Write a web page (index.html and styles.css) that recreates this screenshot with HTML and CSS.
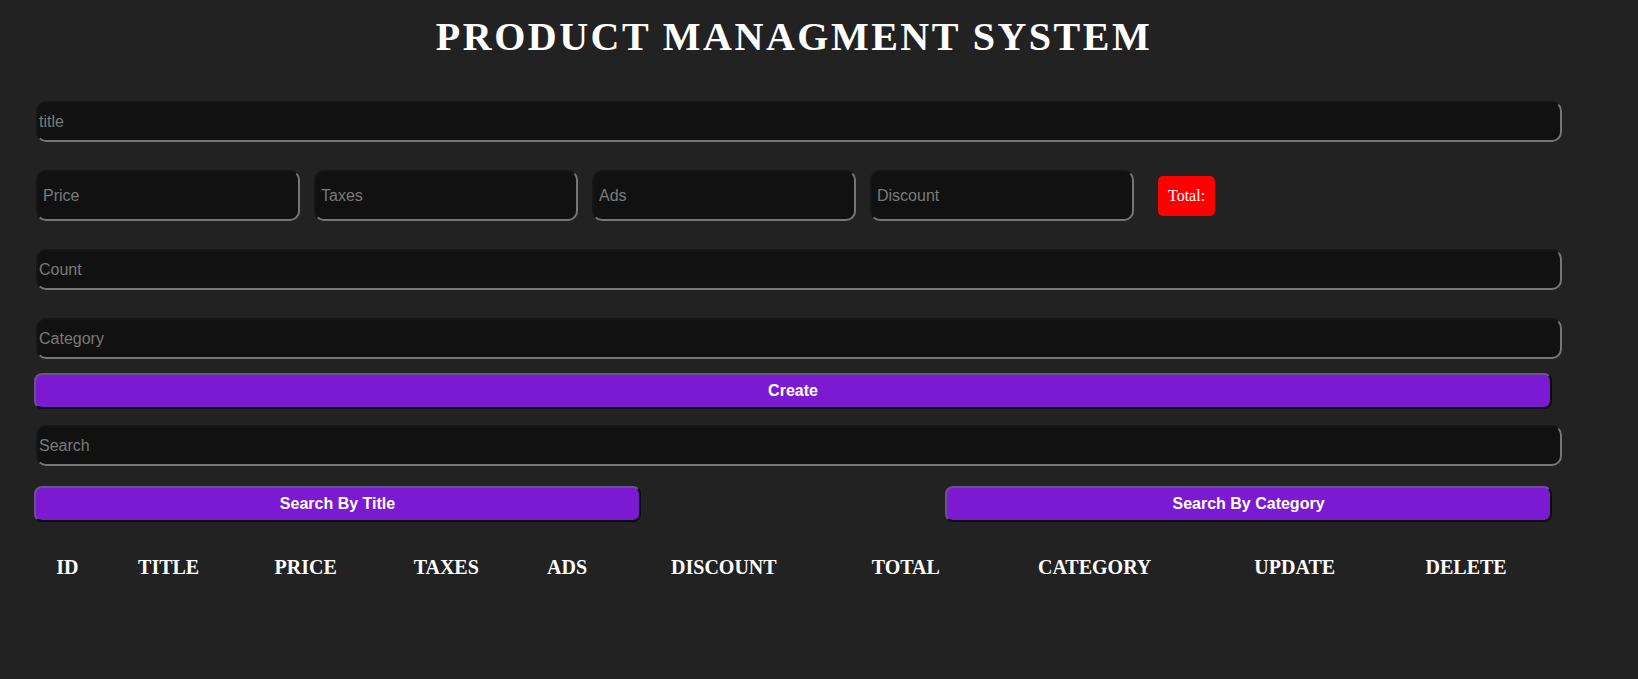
FILE: index.html
```html
<!DOCTYPE html>
<html lang="en">
<head>
<meta charset="utf-8">
<title>Product Managment System</title>
<link rel="stylesheet" href="styles.css">
</head>
<body>
<main class="app">
  <h1 class="heading">PRODUCT MANAGMENT SYSTEM</h1>
  <div class="form">
    <input class="field wide" type="text" placeholder="title">
    <div class="price-row">
      <input class="field small" type="number" placeholder="Price">
      <input class="field small" type="number" placeholder="Taxes">
      <input class="field small" type="number" placeholder="Ads">
      <input class="field small" type="number" placeholder="Discount">
      <small class="total">Total:</small>
    </div>
    <input class="field wide count" type="number" placeholder="Count">
    <input class="field wide category" type="text" placeholder="Category">
    <button class="btn create">Create</button>
    <input class="field wide search" type="text" placeholder="Search">
    <div class="search-btns">
      <button class="btn half">Search By Title</button>
      <button class="btn half">Search By Category</button>
    </div>
  </div>
  <table class="products">
    <thead>
      <tr>
        <th>id</th>
        <th>title</th>
        <th>price</th>
        <th>taxes</th>
        <th>ads</th>
        <th>discount</th>
        <th>total</th>
        <th>category</th>
        <th>update</th>
        <th>delete</th>
      </tr>
    </thead>
    <tbody></tbody>
  </table>
</main>
</body>
</html>
```
FILE: styles.css
```css
html, body {
  margin: 0;
  background: #222222;
}

body {
  color: #ffffff;
  font-family: "Liberation Serif", "Times New Roman", serif;
  height: 679px;
  overflow: hidden;
}

.app {
  padding-left: 34px;
  width: 1528px;
}

.heading {
  margin: 14px 0 0;
  width: 1520px;
  text-align: center;
  font-size: 40px;
  line-height: 46px;
  letter-spacing: 2.5px;
  font-weight: bold;
}

.form {
  display: flex;
  flex-direction: column;
  align-items: flex-start;
  margin-top: 41px;
}

.field {
  box-sizing: border-box;
  background: #111111;
  border: 2px solid;
  border-color: #161616 #767676 #767676 #161616;
  border-radius: 10px;
  font-family: "Liberation Sans", Arial, sans-serif;
  font-size: 16px;
  color: #dddddd;
  outline: none;
  margin: 0;
}

.field::placeholder {
  color: #7a7a7a;
}

.field::-webkit-outer-spin-button,
.field::-webkit-inner-spin-button {
  -webkit-appearance: none;
  margin: 0;
}

.wide {
  width: 1526px;
  height: 41px;
  margin-left: 2px;
  padding: 1px;
}

.price-row {
  display: flex;
  align-items: center;
  gap: 14px;
  margin-top: 28px;
  margin-left: 2px;
}

.small {
  width: 264px;
  height: 51px;
  padding: 0 5px;
}

.total {
  margin-left: 10px;
  background: #ff0000;
  color: #ffffff;
  padding: 10px;
  border-radius: 5px;
  font-family: "Liberation Serif", "Times New Roman", serif;
  font-size: 16px;
  line-height: 20px;
}

.count {
  margin-top: 28px;
}

.category {
  margin-top: 28px;
}

.btn {
  box-sizing: border-box;
  height: 36px;
  background: #7b19d3;
  color: #ffffff;
  font-family: "Liberation Sans", Arial, sans-serif;
  font-size: 16px;
  font-weight: bold;
  border: 2px solid;
  border-color: #6c5190 #060606 #060606 #6c5190;
  border-radius: 8px;
  padding: 0;
  cursor: pointer;
}

.create {
  width: 1518px;
  margin-top: 14px;
}

.search {
  margin-top: 16px;
}

.search-btns {
  display: flex;
  justify-content: space-between;
  width: 1518px;
  margin-top: 20px;
}

.half {
  width: 607px;
}

.products {
  margin-top: 25px;
  margin-left: -1px;
  width: 1520px;
  border-spacing: 2px;
}

.products th {
  padding: 7px;
  font-size: 20px;
  font-weight: bold;
  text-transform: uppercase;
  color: #ffffff;
}
```
